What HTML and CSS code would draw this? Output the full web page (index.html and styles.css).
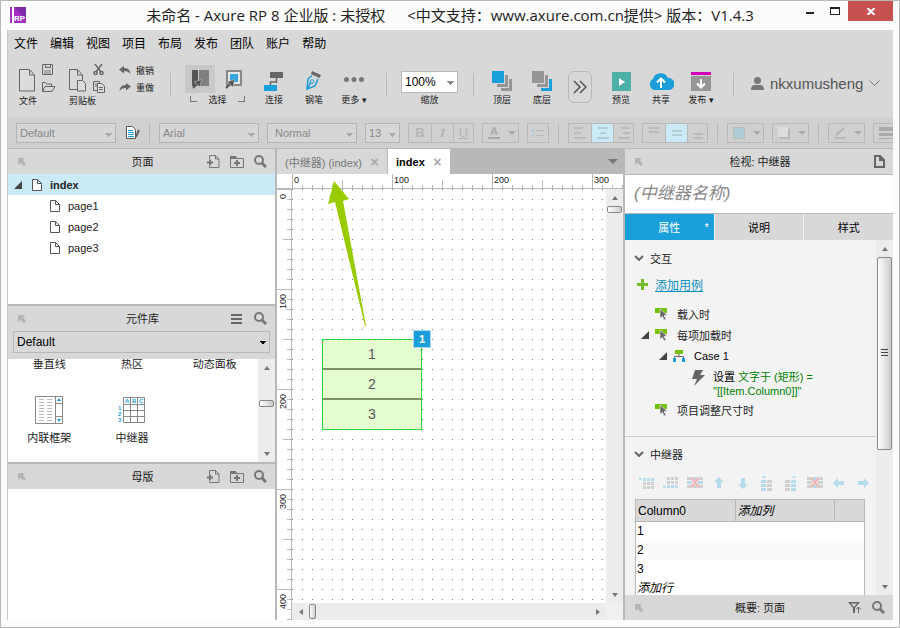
FILE: index.html
```html
<!DOCTYPE html>
<html lang="zh-CN">
<head>
<meta charset="utf-8">
<title>未命名 - Axure RP 8</title>
<link rel="stylesheet" href="styles.css">
</head>

<body>
<svg class="defs" aria-hidden="true">
	<symbol id="i-corner" viewBox="0 0 8 8"><path d="M0 0h7L5 2l3 4-2 2-4-3-2 2z" fill="#b4b4b4"/></symbol>
	<symbol id="i-page" viewBox="0 0 10 12"><path d="M.5.5h5l4 4v7h-9zM5.500.5v4h4" fill="#fff" stroke="#555"/></symbol>
	<symbol id="i-search" viewBox="0 0 13 13"><circle cx="5" cy="5" r="4" fill="none" stroke="#777" stroke-width="2"/><path d="M8 8l4 4" stroke="#777" stroke-width="3"/></symbol>
	<symbol id="i-addpage" viewBox="0 0 13 13"><path d="M2.500 4V.5h6l3.500 3.500v8.500H2.500V11M8.500.5V4H12" fill="none" stroke="#777"/><path d="M0 7.500h6M3 4.500v6" stroke="#777" stroke-width="2"/></symbol>
	<symbol id="i-addfolder" viewBox="0 0 14 12"><path d="M.5 11.500V.5h5l1 2h7v9z" fill="none" stroke="#777"/><path d="M0 0h6l1 3H0z" fill="#777"/><path d="M4 7h6M7 4v6" stroke="#777" stroke-width="2"/></symbol>
	<symbol id="i-twist" viewBox="0 0 8 8"><path d="M8 0v8H0z" fill="#444"/></symbol>
	<symbol id="i-chevron" viewBox="0 0 10 6"><path d="M1 1l4 4 4-4" fill="none" stroke="#666" stroke-width="2"/></symbol>
	<symbol id="i-event" viewBox="0 0 13 12"><path d="M0 0h12v5H0z" fill="#76c100"/><path d="M5 1l7 6-3 .5 2 3.500-2 1-1.500-3.500L5 10z" fill="#666" stroke="#f3f3f3" stroke-width=".6"/></symbol>
	<symbol id="i-cursor" viewBox="0 0 10 10"><path d="M1 9l4-4" stroke="#555" stroke-width="2"/><path d="M9.500.5L8 8 2 3z" fill="#555" stroke="#ccc" stroke-width=".5"/></symbol>
</svg>

<div class="window">
	<header class="titlebar">
		<svg class="logo" width="16" height="16"><path d="M0 0h2v16H0z" fill="#a42fc2"/><path d="M4 0h12v16H4z" fill="#a42fc2"/><path d="M4 0h12v12z" fill="#7d2aa8"/><text x="4" y="14" font-size="8" font-weight="bold" fill="#fff">RP</text></svg>
		<h1><span>未命名 - Axure RP 8 企业版 : 未授权</span><span>&lt;中文支持：www.axure.com.cn提供&gt; 版本：V1.4.3</span></h1>
		<div class="win-btns">
			<button aria-label="最小化"><svg width="8" height="8"><path d="M0 5h8v2H0z" fill="#222"/></svg></button>
			<button aria-label="最大化"><svg width="10" height="8"><path d="M0 0h10v8H0zM1 2v5h8V2z" fill="#222" fill-rule="evenodd"/></svg></button>
			<button class="close" aria-label="关闭"><svg width="8" height="7"><path d="M.5 0l7 7M7.500 0l-7 7" stroke="#fff" stroke-width="2"/></svg></button>
		</div>
	</header>

	<div class="app">
		<nav class="menubar">
			<button>文件</button><button>编辑</button><button>视图</button><button>项目</button><button>布局</button><button>发布</button><button>团队</button><button>账户</button><button>帮助</button>
		</nav>

		<div class="toolbar">
			<div class="group file">
				<div class="icons">
					<button aria-label="新建"><svg width="17" height="23"><path d="M.5.500h10l5 5.500v16H.5zM10.500.500V6h5" fill="#dcdcdc" stroke="#666"/></svg></button>
					<div class="pair">
						<button aria-label="保存"><svg width="13" height="12"><path d="M.5.500h10v10H.5z" fill="none" stroke="#666"/><path d="M3.500.500v3h5v-3" fill="none" stroke="#666"/><path d="M2 6h7v4H2z" fill="#aaa"/></svg></button>
						<button aria-label="打开"><svg width="14" height="11"><path d="M.5 9.500V.500h3l1 1.500h5v2M.5 9.500L3 4.500h10L10 9.500z" fill="none" stroke="#666"/></svg></button>
					</div>
				</div>
				<div class="label">文件</div>
			</div>
			<div class="group clip">
				<div class="icons">
					<button aria-label="粘贴"><svg width="18" height="23"><path d="M8 20.500H.5V.500h8l5 5.500v5M8.500.500V6h5" fill="none" stroke="#666"/><path d="M8.500 11.500h5l3 3v7.500h-8z" fill="#dcdcdc" stroke="#666"/></svg></button>
					<div class="pair">
						<button aria-label="剪切"><svg width="12" height="12" fill="none" stroke="#666" stroke-width="1.500"><path d="M2 0l6 8M9 0L3 8"/><circle cx="2.500" cy="9" r="1.600"/><circle cx="8.500" cy="9" r="1.600"/></svg></button>
						<button aria-label="复制"><svg width="13" height="12" stroke="#666"><path d="M.5.500h6v9h-6zM2 3h3M2 5h3" fill="none"/><path d="M4.500 2.500h4l3 2.500v6.500h-7zM6 6.500h4M6 8.500h4" fill="#dcdcdc"/></svg></button>
					</div>
				</div>
				<div class="label">剪贴板</div>
			</div>
			<div class="undo">
				<button><svg width="12" height="9"><path d="M0 3.500L5 0v2c4 0 6 2 6.500 6C10 6 8 5 5 5v2.500z" fill="#666"/></svg>撤销</button>
				<button><svg width="12" height="9"><path d="M12 3.500L7 0v2C3 2 1 4 .5 8 2 6 4 5 7 5v2.500z" fill="#666"/></svg>重做</button>
			</div>
			<span class="sep"></span>
			<div class="group select">
				<div class="icons">
					<button class="on" aria-label="相交选中"><svg width="17" height="20"><path d="M0 1h6v16H0z" fill="#555"/><path d="M7 1h10v16H7z" fill="#808080"/><use href="#i-cursor" y="10" width="10" height="10"/></svg></button>
					<button aria-label="包含选中"><svg width="18" height="20"><path d="M2 2h14v14H2z" fill="#fff" fill-opacity=".4" stroke="#888" stroke-width="2"/><path d="M5 5h8v8H5z" fill="#36a7db"/><use href="#i-cursor" y="10" width="10" height="10"/></svg></button>
				</div>
				<div class="label"><i class="br-l"></i>选择<i class="br-r"></i></div>
			</div>
			<button class="tool"><span><svg width="20" height="20"><path d="M6 1h13v6H6z" fill="#666"/><path d="M12.500 7v4h-6v3" fill="none" stroke="#666" stroke-width="1.500"/><path d="M0 14h13v6H0z" fill="#1a9fda"/></svg></span>连接</button>
			<button class="tool"><span><svg width="16" height="20"><path d="M6 0l9 4-1.500 3L5 3z" fill="#666"/><path d="M6 4.500L2 8 1 18l8-3 3-7M1 18l4-7" fill="none" stroke="#1a9fda" stroke-width="1.500"/><circle cx="6" cy="10.500" r="1.800" fill="none" stroke="#1a9fda"/></svg></span>钢笔</button>
			<button class="tool"><span><svg width="20" height="20" fill="#777"><circle cx="2.500" cy="8.500" r="2.500"/><circle cx="10" cy="8.500" r="2.500"/><circle cx="17.500" cy="8.500" r="2.500"/></svg></span>更多 ▾</button>
			<span class="sep"></span>
			<div class="zoom">
				<select id="zoom"><option>100%</option></select>
				<label for="zoom">缩放</label>
			</div>
			<span class="sep"></span>
			<div class="tools">
				<button class="tool"><span><svg width="20" height="20" fill="#969696"><path d="M17 8h3v12H9v-3h8zM13 4h3v12H5v-3h8z"/><path d="M0 0h12v12H0z" fill="#1a9fda"/></svg></span>顶层</button>
				<button class="tool"><span><svg width="20" height="20" fill="#969696"><path d="M17 8h3v12H9v-3h8z" fill="#1a9fda"/><path d="M13 4h3v12H5v-3h8zM0 0h12v12H0z"/></svg></span>底层</button>
			</div>
			<button class="more" aria-label="展开"><svg width="14" height="14" fill="none" stroke="#555" stroke-width="1.500"><path d="M1 1l6 6-6 6M7 1l6 6-6 6"/></svg></button>
			<div class="tools">
				<button class="tool"><span><svg width="19" height="20"><path d="M0 1h19v19H0z" fill="#4bb1a6"/><path d="M7 7l6 4-6 4z" fill="#fff"/></svg></span>预览</button>
				<button class="tool"><span><svg width="26" height="20"><path d="M6 19a6 6 0 0 1-1-11 8 8 0 0 1 15-1 6 6 0 0 1 1 12z" fill="#1a9fda"/><path d="M13 17V8M9 11.500l4-4 4 4" fill="none" stroke="#fff" stroke-width="2"/></svg></span>共享</button>
				<button class="tool"><span><svg width="20" height="20"><path d="M0 1h20v3H0z" fill="#d400b8"/><path d="M0 5h20v15H0z" fill="#969696"/><path d="M10 8v8M6 12.500l4 4 4-4" fill="none" stroke="#fff" stroke-width="2"/></svg></span>发布 ▾</button>
			</div>
			<span class="sep"></span>
			<button class="user"><svg width="13" height="13" fill="#777"><circle cx="6.500" cy="3.500" r="3.500"/><path d="M0 13c0-4 2-5 4-5h5c2 0 4 1 4 5z"/></svg>nkxumusheng<svg width="11" height="7"><path d="M.5.500l5 5 5-5" fill="none" stroke="#777"/></svg></button>
		</div>

		<div class="stylebar">
			<select class="w100" aria-label="样式"><option>Default</option></select>
			<button class="plain" aria-label="样式管理"><svg width="14" height="13"><path d="M.5.500h6l3 3v9h-9z" fill="#fff" stroke="#555"/><path d="M2 4.500h5M2 6.500h6M2 8.500h6M2 10.500h6" stroke="#1a9fda"/><path d="M13 4l-3 7" stroke="#666" stroke-width="2"/></svg></button>
			<span class="bar"></span>
			<select class="w100" aria-label="字体"><option>Arial</option></select>
			<select class="w90" aria-label="字型"><option>Normal</option></select>
			<select class="w35" aria-label="字号"><option>13</option></select>
			<div class="seg"><button><b>B</b></button><button class="it">I</button><button><u>U</u></button></div>
			<button class="drop" aria-label="文字颜色"><svg width="12" height="13"><path d="M0 11h12v2H0z" fill="#aaa"/><text x="2" y="9" font-size="11" font-weight="bold" fill="#aaa">A</text></svg></button>
			<div class="seg"><button aria-label="项目符号"><svg width="12" height="8"><path d="M4 1.500h8M4 6.500h8" stroke="#bbb"/><path d="M0 1.500h2M0 6.500h2" stroke="#9cc8d8" stroke-width="2"/></svg></button></div>
			<span class="bar"></span>
			<div class="seg">
				<button aria-label="左对齐"><svg width="12" height="12"><path d="M0 1h9M0 6h7M0 11h12" stroke="#bbb" stroke-width="2"/></svg></button>
				<button class="on" aria-label="居中"><svg width="12" height="12"><path d="M1 1h10M3 6h6M0 11h12" stroke="#b4ccd4" stroke-width="2"/></svg></button>
				<button aria-label="右对齐"><svg width="12" height="12"><path d="M3 1h9M5 6h7M0 11h12" stroke="#bbb" stroke-width="2"/></svg></button>
			</div>
			<div class="seg">
				<button aria-label="顶部"><svg width="10" height="12"><path d="M0 1h10M0 5h10" stroke="#bbb" stroke-width="2"/></svg></button>
				<button class="on" aria-label="中部"><svg width="10" height="12"><path d="M0 4h10M0 8h10" stroke="#b4ccd4" stroke-width="2"/></svg></button>
				<button aria-label="底部"><svg width="10" height="12"><path d="M0 7h10M0 11h10" stroke="#bbb" stroke-width="2"/></svg></button>
			</div>
			<span class="bar"></span>
			<button class="drop" aria-label="填充"><svg width="12" height="12"><path d="M.5.500h11v11H.5z" fill="#aecbd8" stroke="#bbb"/></svg></button>
			<button class="drop" aria-label="阴影"><svg width="12" height="12"><path d="M2 2h10v10H2z" fill="#b8b8b8"/><path d="M0 0h10v10H0z" fill="#ddd"/></svg></button>
			<span class="bar"></span>
			<button class="drop" aria-label="线条"><svg width="13" height="12"><path d="M0 10h12v2H0z" fill="#bbb"/><path d="M2 8l8-7" stroke="#b4b4b4" stroke-width="2"/></svg></button>
			<button class="drop" aria-label="线宽"><svg width="14" height="12"><path d="M0 0h14v4H0zM0 6h14v3H0zM0 11h14v1H0z" fill="#aaa"/></svg></button>
		</div>

		<main class="panels">
			<aside class="left">
				<section class="pages">
					<div class="head">
						<svg width="8" height="8"><use href="#i-corner"/></svg>
						<h2>页面</h2>
						<div class="acts">
							<button aria-label="添加页面"><svg width="13" height="13"><use href="#i-addpage"/></svg></button>
							<button aria-label="添加文件夹"><svg width="14" height="12"><use href="#i-addfolder"/></svg></button>
							<button aria-label="搜索"><svg width="13" height="13"><use href="#i-search"/></svg></button>
						</div>
					</div>
					<ul class="tree">
						<li class="root"><svg class="twist" width="8" height="8"><use href="#i-twist"/></svg><svg class="pg" width="10" height="12"><use href="#i-page"/></svg>index</li>
						<li><svg class="pg" width="10" height="12"><use href="#i-page"/></svg>page1</li>
						<li><svg class="pg" width="10" height="12"><use href="#i-page"/></svg>page2</li>
						<li><svg class="pg" width="10" height="12"><use href="#i-page"/></svg>page3</li>
					</ul>
				</section>
				<section class="library">
					<div class="head">
						<svg width="8" height="8"><use href="#i-corner"/></svg>
						<h2>元件库</h2>
						<div class="acts wide">
							<button aria-label="菜单"><svg width="11" height="10"><path d="M0 1h11M0 5h11M0 9h11" stroke="#666" stroke-width="2"/></svg></button>
							<button aria-label="搜索"><svg width="13" height="13"><use href="#i-search"/></svg></button>
						</div>
					</div>
					<div class="lib-pick"><select aria-label="元件库"><option>Default</option></select></div>
					<div class="lib-body">
						<div class="widgets">
							<div>垂直线</div>
							<div>热区</div>
							<div>动态面板</div>
							<div class="widget"><svg width="28" height="28"><path d="M.5.500h27v27H.5zM20.500.500v27M20.500 7.500h7M20.500 20.500h7" fill="#fff" stroke="#888"/><path d="M4 3.500h5M4 6.500h5M4 9.500h5M4 12.500h5M4 15.500h5M4 18.500h5M4 21.500h5M4 24.500h5M12 3.500h5M12 6.500h5M12 9.500h5M12 12.500h5M12 15.500h5M12 18.500h5M12 21.500h5M12 24.500h5" stroke="#bbb"/><path d="M22 5l2-3 2 3zM22 23l2 3 2-3z" fill="#1a9fda"/></svg>内联框架</div>
							<div class="widget"><svg width="28" height="28"><path d="M5.500 1.500h21v25h-21zM5.500 8.500h21M5.500 14.500h21M5.500 20.500h21M12.500 1.500v25M19.500 1.500v25" fill="#fff" stroke="#888"/><g fill="#1a9fda" font-size="6" font-weight="bold"><text x="7" y="7">A</text><text x="14" y="7">B</text><text x="21" y="7">C</text><text x="0" y="14">1</text><text x="0" y="20">2</text><text x="0" y="26">3</text></g></svg>中继器</div>
						</div>
						<div class="scroll v"><i class="up"></i><div class="track"><b class="knob lib-knob"></b></div><i class="down"></i></div>
					</div>
				</section>
				<section class="masters">
					<div class="head">
						<svg width="8" height="8"><use href="#i-corner"/></svg>
						<h2>母版</h2>
						<div class="acts">
							<button aria-label="添加母版"><svg width="13" height="13"><use href="#i-addpage"/></svg></button>
							<button aria-label="添加文件夹"><svg width="14" height="12"><use href="#i-addfolder"/></svg></button>
							<button aria-label="搜索"><svg width="13" height="13"><use href="#i-search"/></svg></button>
						</div>
					</div>
				</section>
			</aside>

			<section class="editor">
				<div class="tabs">
					<div class="tab"><span>(中继器) (index)</span><button aria-label="关闭">×</button></div>
					<div class="tab active"><span>index</span><button aria-label="关闭">×</button></div>
					<button class="tab-list" aria-label="标签列表"></button>
				</div>
				<div class="corner"></div>
				<div class="ruler-x"><span>0</span><span>100</span><span>200</span><span>300</span></div>
				<div class="ruler-y"><span>0</span><span>100</span><span>200</span><span>300</span><span>400</span></div>
				<div class="canvas">
					<div class="repeater">
						<div>1</div>
						<div>2</div>
						<div>3</div>
						<span class="badge">1</span>
					</div>
				</div>
				<div class="scroll v"><i class="up"></i><div class="track"><b class="knob"></b></div><i class="down"></i></div>
				<div class="scroll h"><i class="prev"></i><div class="track"><b class="knob"></b></div><i class="next"></i></div>
				<div class="scroll-end"></div>
				<svg class="pointer" width="40" height="148"><path d="M7 1l15 18-6 2 23 125h-1L8 22l-7 2z" fill="#99cc00"/></svg>
			</section>

			<aside class="right">
				<div class="head">
					<svg width="8" height="8"><use href="#i-corner"/></svg>
					<h2>检视: 中继器</h2>
					<div class="acts"><button aria-label="页面"><svg width="11" height="13"><path d="M1 1h5l4 4v7H1zM6 1v4h4" fill="none" stroke="#666" stroke-width="2"/></svg></button></div>
				</div>
				<input class="name" type="text" placeholder="(中继器名称)" aria-label="名称">
				<div class="props">
					<button class="active">属性<sup>*</sup></button>
					<button>说明</button>
					<button>样式</button>
				</div>
				<div class="inspect">
					<div class="content">
						<h3><svg width="10" height="6"><use href="#i-chevron"/></svg>交互</h3>
						<div class="add"><svg width="11" height="11"><path d="M4 0h3v4h4v3H7v4H4V7H0V4h4z" fill="#72b92b"/></svg><a href="#">添加用例</a></div>
						<ul class="events">
							<li><i class="twist"></i><svg class="ic" width="13" height="12"><use href="#i-event"/></svg>载入时</li>
							<li><svg class="twist" width="8" height="8"><use href="#i-twist"/></svg><svg class="ic" width="13" height="12"><use href="#i-event"/></svg>每项加载时</li>
							<li class="case"><svg class="twist" width="8" height="8"><use href="#i-twist"/></svg><svg class="ic" width="12" height="12"><path d="M2 0h8v4H2z" fill="#76c100"/><path d="M6 4v2M1.500 9V6.500h9V9" fill="none" stroke="#666"/><path d="M0 8h3v4H0zM9 8h3v4H9z" fill="#1a9fda"/></svg>Case 1</li>
							<li class="action"><svg width="13" height="16"><path d="M3 0h8L8 5h5L2 16l3-7H0z" fill="#666"/></svg><div>设置 <em>文字于 (矩形) =<br>"[[Item.Column0]]"</em></div></li>
							<li><i class="twist"></i><svg class="ic" width="13" height="12"><use href="#i-event"/></svg>项目调整尺寸时</li>
						</ul>
						<h3 class="line"><svg width="10" height="6"><use href="#i-chevron"/></svg>中继器</h3>
						<div class="row-tools">
							<button aria-label="上方插入行"><svg width="16" height="12"><path d="M0 0l3 2-3 2z" fill="#b4dcec"/><path d="M4 1h3v3H4zM8 1h3v3H8zM12 1h3v3h-3z" fill="#b4dcec"/><path d="M4 5h3v3H4zM8 5h3v3H8zM12 5h3v3h-3zM4 9h3v3H4zM8 9h3v3H8zM12 9h3v3h-3z" fill="#d0d0d0"/></svg></button>
							<button aria-label="下方插入行"><svg width="16" height="12"><path d="M0 8l3 2-3 2z" fill="#b4dcec"/><path d="M4 8h3v3H4zM8 8h3v3H8zM12 8h3v3h-3z" fill="#b4dcec"/><path d="M4 0h3v3H4zM8 0h3v3H8zM12 0h3v3h-3zM4 4h3v3H4zM8 4h3v3H8zM12 4h3v3h-3z" fill="#d0d0d0"/></svg></button>
							<button aria-label="删除行"><svg width="16" height="12"><path d="M0 0h5v3H0zM6 0h4v3H6zM11 0h5v3h-5zM0 8h5v3H0zM6 8h4v3H6zM11 8h5v3h-5z" fill="#d0d0d0"/><path d="M0 4h5v3H0zM11 4h5v3h-5z" fill="#b4dcec"/><path d="M4 1l8 9M12 1l-8 9" stroke="#f0b4b4" stroke-width="2"/></svg></button>
							<button aria-label="上移"><svg width="10" height="12"><path d="M5 0l5 5H7v6H3V5H0z" fill="#b4dcec"/></svg></button>
							<button aria-label="下移"><svg width="10" height="12"><path d="M5 12l5-5H7V1H3v6H0z" fill="#b4dcec"/></svg></button>
							<button aria-label="左侧插入列"><svg width="12" height="15"><path d="M1 0h4L3 3zM0 4h5v3H0zM0 8h5v3H0zM0 12h5v3H0z" fill="#b4dcec"/><path d="M6 4h5v3H6zM6 8h5v3H6zM6 12h5v3H6z" fill="#d0d0d0"/></svg></button>
							<button aria-label="右侧插入列"><svg width="12" height="15"><path d="M7 0h4L9 3zM6 4h5v3H6zM6 8h5v3H6zM6 12h5v3H6z" fill="#b4dcec"/><path d="M0 4h5v3H0zM0 8h5v3H0zM0 12h5v3H0z" fill="#d0d0d0"/></svg></button>
							<button aria-label="删除列"><svg width="16" height="12"><path d="M0 0h5v3H0zM11 0h5v3h-5zM0 4h5v3H0zM11 4h5v3h-5zM0 8h5v3H0zM11 8h5v3h-5z" fill="#d0d0d0"/><path d="M6 0h4v3H6zM6 8h4v3H6z" fill="#b4dcec"/><path d="M4 1l8 9M12 1l-8 9" stroke="#f0b4b4" stroke-width="2"/></svg></button>
							<button aria-label="左移"><svg width="12" height="10"><path d="M0 5l5-5v3h6v4H5v3z" fill="#b4dcec"/></svg></button>
							<button aria-label="右移"><svg width="12" height="10"><path d="M12 5L7 0v3H1v4h6v3z" fill="#b4dcec"/></svg></button>
						</div>
						<table class="data">
							<thead><tr><th>Column0</th><th><em>添加列</em></th><th class="end"></th></tr></thead>
							<tbody>
								<tr><td colspan="3">1</td></tr>
								<tr><td colspan="3">2</td></tr>
								<tr><td colspan="3">3</td></tr>
								<tr><td colspan="3"><em>添加行</em></td></tr>
							</tbody>
						</table>
					</div>
					<div class="scroll v"><i class="up"></i><div class="track"><b class="knob long"></b></div><i class="down"></i></div>
				</div>
				<div class="head">
					<svg width="8" height="8"><use href="#i-corner"/></svg>
					<h2>概要: 页面</h2>
					<div class="acts">
						<button aria-label="筛选"><svg width="14" height="11"><path d="M0 0h12L7 6v5H5V6z" fill="#666"/><path d="M3 1.500h6L6 5z" fill="#d8d8d8"/><path d="M10.500 11V5M8 7.500L10.500 5 13 7.500" fill="none" stroke="#666"/></svg></button>
						<button aria-label="搜索"><svg width="13" height="13"><use href="#i-search"/></svg></button>
					</div>
				</div>
			</aside>
		</main>
	</div>
</div>
</body>
</html>
```

FILE: styles.css
```css
* {
	box-sizing: border-box;
}
html, body {
	margin: 0px;
	padding: 0px;
}
body {
	font-family: "Liberation Sans", "Noto Sans CJK SC", sans-serif;
	font-size: 11px;
	color: #222;
}
button, select, input {
	font: inherit;
	color: inherit;
	margin: 0px;
	padding: 0px;
	border: none;
	border-radius: 0px;
	background: none;
}
button {
	cursor: pointer;
}
h1, h2, h3, ul {
	margin: 0px;
	padding: 0px;
	font-weight: normal;
	list-style: none;
}
svg {
	display: block;
	flex: none;
}
.defs {
	position: absolute;
	width: 0px;
	height: 0px;
}
.window {
	display: flex;
	flex-direction: column;
	height: 100vh;
	padding: 0px 6px 7px;
	border: 1px solid #b8b8b8;
	background: #fcfcfc;
}

/* 标题栏 */
.titlebar {
	display: grid;
	grid-template-columns: 94px 1fr 94px;
	height: 29px;
}
.logo {
	margin: 6px 0px 0px 3px;
}
.titlebar h1 {
	display: flex;
	justify-content: center;
	gap: 22px;
	font-family: "Open Sans", "Noto Sans CJK SC", sans-serif;
	font-size: 15px;
	line-height: 29px;
	white-space: nowrap;
}
.win-btns {
	display: grid;
	grid-template-columns: 22px 27px 45px;
	height: 20px;
}
.win-btns button {
	display: flex;
	align-items: center;
	justify-content: center;
}
.win-btns .close {
	background: #c75050;
}

.app {
	flex: 1;
	min-height: 0px;
	display: flex;
	flex-direction: column;
	border-left: 1px solid #c8c8c8;
	background: #d8d8d8;
}
.menubar {
	display: flex;
	flex: none;
	gap: 12px;
	height: 24px;
	padding: 0px 6px;
	font-size: 12px;
	color: #000;
}

/* 工具栏 */
.toolbar {
	display: flex;
	flex: none;
	height: 64px;
	font-size: 9px;
	white-space: nowrap;
}
.toolbar .sep {
	flex: none;
	width: 1px;
	height: 23px;
	margin: 19px 12px 0px;
	background: #b8b8b8;
}
.group {
	padding-top: 10px;
}
.group .icons {
	display: flex;
	align-items: flex-end;
	height: 29px;
	gap: 6px;
}
.group .icons > button {
	padding-bottom: 1px;
}
.group .label {
	line-height: 16px;
}
.file {
	width: 50px;
	margin-left: 11px;
}
.clip {
	width: 50px;
}
.pair {
	display: flex;
	flex-direction: column;
	justify-content: space-between;
	height: 29px;
}
.undo {
	display: flex;
	flex-direction: column;
	gap: 1px;
	width: 39px;
	padding-top: 8px;
}
.undo button {
	display: flex;
	align-items: center;
	gap: 5px;
	height: 16px;
}
.undo + .sep {
	margin-right: 14px;
}
.group.select {
	width: 69px;
}
.group.select .icons {
	gap: 10px;
}
.group.select .icons button {
	display: flex;
	align-items: center;
	justify-content: center;
	height: 28px;
	padding: 0px;
}
.group.select .on {
	width: 30px;
	background: #c8c8c8;
}
.group.select .label {
	display: flex;
	justify-content: space-between;
	width: 55px;
	margin-left: 5px;
	line-height: 14px;
}
.group.select .label i {
	width: 7px;
	height: 6px;
	margin-top: 3px;
	border-bottom: 1px solid #777;
}
.group.select .label .br-l {
	border-left: 1px solid #777;
}
.group.select .label .br-r {
	border-right: 1px solid #777;
}
.tools {
	display: flex;
}
.tool {
	display: flex;
	flex-direction: column;
	align-items: center;
	width: 40px;
	padding-top: 17px;
	line-height: 14px;
}
.tool span {
	height: 22px;
}
.zoom {
	display: flex;
	flex-direction: column;
	align-items: center;
	width: 57px;
	padding-top: 17px;
	line-height: 14px;
	margin: 0px 3px 0px 2px;
}
.zoom + .sep {
	margin-right: 8px;
}
.zoom select {
	width: 57px;
	height: 22px;
	background-color: #fff;
	font-size: 12px;
	color: #000;
}
.more {
	display: flex;
	align-items: center;
	justify-content: center;
	width: 24px;
	height: 32px;
	margin: 17px 9px 0px 6px;
	border: 1px solid #b8b8b8;
	border-radius: 6px;
}
.user {
	display: flex;
	align-items: center;
	gap: 6px;
	height: 22px;
	margin: 18px 0px 0px 5px;
	font-size: 15px;
	color: #555;
}

select {
	appearance: none;
	padding: 0px 3px;
	border: 1px solid #b8b8b8;
	background-image: linear-gradient(to bottom left, #888 50%, transparent 50%), linear-gradient(to bottom right, #888 50%, transparent 50%);
	background-position: right 6px top 9px, right 2px top 9px;
	background-size: 4px 4px;
	background-repeat: no-repeat;
}

/* 样式栏 */
.stylebar {
	display: flex;
	flex: none;
	align-items: center;
	gap: 8px;
	height: 31px;
	padding: 0px 0px 1px 8px;
	border-bottom: 1px solid #b8b8b8;
	background: #d0d0d0;
	color: #888;
	overflow: hidden;
}
.stylebar > * {
	flex: none;
}
.stylebar select {
	height: 20px;
	border-color: #b4b4b4;
	background-color: #d6d6d6;
	background-image: linear-gradient(to bottom left, #aaa 50%, transparent 50%), linear-gradient(to bottom right, #aaa 50%, transparent 50%);
}
.w100 {
	width: 100px;
}
.w90 {
	width: 90px;
}
.stylebar .w90 {
	padding-left: 7px;
}
.w35 {
	width: 35px;
}
.plain {
	padding-left: 2px;
}
.bar {
	width: 1px;
	height: 20px;
	margin: 0px 1px;
	background: #b8b8b8;
}
.seg {
	display: flex;
	height: 20px;
	border: 1px solid #b8b8b8;
}
.seg button {
	display: flex;
	align-items: center;
	justify-content: center;
	width: 22px;
	font-size: 13px;
	color: #b4b4b4;
}
.seg button:last-child {
	width: 20px;
}
.seg button + button {
	border-left: 1px solid #b8b8b8;
}
.seg .it {
	font-family: "Liberation Serif", serif;
	font-style: italic;
	font-weight: bold;
}
.seg .on {
	background: #cbeaf7;
}
.drop {
	display: flex;
	align-items: center;
	justify-content: space-between;
	width: 37px;
	height: 20px;
	padding: 0px 2px 0px 5px;
	border: 1px solid #b8b8b8;
}
.drop::after {
	content: "";
	border: 4px solid transparent;
	border-top-color: #aaa;
	border-bottom: none;
}

.panels {
	flex: 1;
	min-height: 0px;
	display: grid;
	grid-template-columns: 267px minmax(0px, 1fr) 268px;
	grid-template-rows: minmax(0px, 1fr);
	gap: 2px;
	background: #b8b8b8;
}
.head {
	display: grid;
	grid-template-columns: 1fr auto 1fr;
	align-items: center;
	flex: none;
	height: 25px;
	padding: 0px 8px 0px 10px;
	background: #d8d8d8;
}
.head h2 {
	font-size: 11px;
	line-height: 14px;
}
.acts {
	display: flex;
	align-items: center;
	justify-content: flex-end;
	gap: 10px;
}
.acts.wide {
	gap: 12px;
}

/* 左侧面板 */
.left {
	display: flex;
	flex-direction: column;
	gap: 2px;
	min-height: 0px;
}
.left section {
	min-height: 0px;
	background: #fff;
}
.pages {
	flex: 155;
}
.library {
	flex: 156;
	display: flex;
	flex-direction: column;
}
.masters {
	flex: 156;
}
.tree li {
	display: flex;
	align-items: center;
	height: 21px;
	padding-left: 42px;
}
.tree .root {
	padding-left: 6px;
	background: #cbeaf7;
	font-weight: bold;
}
.tree .twist {
	margin-right: 10px;
}
.tree .pg {
	margin-right: 8px;
}
.lib-pick {
	flex: none;
	height: 28px;
	padding: 0px 5px;
	background: #d8d8d8;
}
.lib-pick select {
	width: 100%;
	height: 22px;
	color: #000;
	font-size: 12px;
	background-image: linear-gradient(to bottom left, #000 50%, transparent 50%), linear-gradient(to bottom right, #000 50%, transparent 50%);
}
.lib-body {
	flex: 1;
	display: flex;
	min-height: 0px;
	overflow: hidden;
}
.widgets {
	flex: 1;
	display: grid;
	grid-template-columns: 1fr 1fr 1fr;
	grid-template-rows: 11px 53px;
	row-gap: 26px;
	padding-right: 2px;
	line-height: 11px;
	text-align: center;
}
.widget {
	display: flex;
	flex-direction: column;
	align-items: center;
	gap: 9px;
}

/* 滚动条 */
.scroll {
	display: flex;
	flex: none;
	min-height: 0px;
	background: #ececec;
}
.scroll.v {
	flex-direction: column;
	width: 17px;
}
.scroll.h {
	height: 17px;
}
.scroll i {
	display: flex;
	align-items: center;
	justify-content: center;
	flex: none;
	width: 17px;
	height: 17px;
}
.scroll i::before {
	content: "";
	border: 3px solid transparent;
}
.scroll .up::before {
	border-top: none;
	border-bottom: 4px solid #777;
}
.scroll .down::before {
	border-bottom: none;
	border-top: 4px solid #777;
}
.scroll .prev::before {
	border-left: none;
	border-right: 4px solid #777;
}
.scroll .next::before {
	border-right: none;
	border-left: 4px solid #777;
}
.track {
	flex: 1;
	min-height: 0px;
}
.knob {
	display: block;
	border: 1px solid #888;
	border-radius: 2px;
	background: linear-gradient(to right, #fff, #ccc);
}
.v .knob {
	width: 15px;
	height: 7px;
	margin-left: 1px;
}
.h .knob {
	width: 7px;
	height: 15px;
	margin-top: 1px;
}
.v .lib-knob {
	margin-top: 24px;
}
.v .long {
	display: flex;
	align-items: center;
	justify-content: center;
	height: 60%;
}
.long::before {
	content: "";
	width: 7px;
	height: 8px;
	background: repeating-linear-gradient(#444 0px 1px, transparent 1px 3px);
}

/* 画布 */
.editor {
	position: relative;
	display: grid;
	grid-template-columns: 15px minmax(0px, 1fr) 17px;
	grid-template-rows: 25px 15px minmax(0px, 1fr) 17px;
}
.tabs {
	grid-column: 1 / 4;
	display: flex;
	background: #b8b8b8;
}
.tab {
	display: flex;
	align-items: center;
	gap: 8px;
	padding: 0px 8px;
	background: #d8d8d8;
	color: #777;
}
.tab button {
	width: 9px;
	font-size: 14px;
	font-weight: bold;
	color: #aaa;
}
.tab.active {
	margin-left: 1px;
	background: #fff;
	color: #000;
	font-weight: bold;
}
.tab-list {
	margin-left: auto;
	padding: 0px 5px;
}
.tab-list::after {
	content: "";
	display: block;
	border: 5px solid transparent;
	border-top-color: #777;
	border-bottom: none;
}
.corner {
	border-bottom: 1px solid #b8b8b8;
	background: #fff;
}
.ruler-x {
	grid-column: 2 / 4;
	display: flex;
	overflow: hidden;
	border-bottom: 1px solid #b8b8b8;
	background:
		linear-gradient(to right, #b8b8b8 1px, transparent 1px) 0px 0px / 100px 14px repeat-x,
		linear-gradient(to right, #b8b8b8 1px, transparent 1px) 0px 6px / 50px 8px repeat-x,
		linear-gradient(to right, #b8b8b8 1px, transparent 1px) 0px 11px / 10px 3px repeat-x,
		#fff;
}
.ruler-x span {
	flex: none;
	width: 100px;
	padding-left: 2px;
	font-size: 9px;
	line-height: 12px;
}
.ruler-x span:last-child {
	width: auto;
}
.ruler-y {
	grid-row: 3 / 5;
	overflow: hidden;
	border-right: 1px solid #b8b8b8;
	background:
		linear-gradient(#b8b8b8 1px, transparent 1px) 0px 0px / 14px 100px repeat-y,
		linear-gradient(#b8b8b8 1px, transparent 1px) 6px 0px / 8px 50px repeat-y,
		linear-gradient(#b8b8b8 1px, transparent 1px) 10px 0px / 4px 10px repeat-y,
		#fff;
}
.ruler-y span {
	display: block;
	height: 100px;
	padding-bottom: 5px;
	font-size: 9px;
	line-height: 12px;
	writing-mode: vertical-rl;
	transform: rotate(180deg);
	text-align: right;
}
.ruler-y span:last-child {
	height: 25px;
}
.canvas {
	position: relative;
	overflow: hidden;
	background: conic-gradient(at 1px 1px, transparent 270deg, #777 270deg) 0px 0px / 10px 10px #fff;
}
.repeater {
	position: absolute;
	left: 30px;
	top: 150px;
	width: 100px;
	border: 1px solid #6fa860;
	outline: 1px dashed #00f020;
	outline-offset: -1px;
	background: #e5fcd0;
	font-size: 14px;
	color: #555;
	text-align: center;
}
.repeater div {
	height: 30px;
	line-height: 28px;
	border-bottom: 2px solid #7e9468;
}
.repeater div:nth-child(3) {
	height: 29px;
	border: none;
}
.badge {
	position: absolute;
	right: -10px;
	top: -10px;
	width: 18px;
	height: 18px;
	border: 1px solid #a8dcf2;
	background: #1a9fda;
	color: #fff;
	font-size: 11px;
	font-weight: bold;
	line-height: 16px;
}
.scroll-end {
	background: #f0f0f0;
}
.pointer {
	position: absolute;
	left: 50px;
	top: 31px;
}

/* 右侧检视面板 */
.right {
	display: flex;
	flex-direction: column;
	min-height: 0px;
}
.name {
	flex: none;
	width: 100%;
	height: 40px;
	padding: 0px 9px;
	border: solid #b8b8b8;
	border-width: 1px 0px;
	background: #fff;
	font-size: 17px;
	font-style: italic;
}
.name::placeholder {
	color: #888;
}
.props {
	flex: none;
	display: grid;
	grid-template-columns: 1fr 1fr 1fr;
	gap: 1px;
	height: 26px;
	background: #f3f3f3;
}
.props button {
	position: relative;
	background: #d8d8d8;
	color: #000;
}
.props .active {
	background: #1a9fda;
	color: #fff;
}
.props sup {
	position: absolute;
	right: 5px;
	top: 6px;
	font-size: 11px;
	line-height: 14px;
}
.inspect {
	flex: 1;
	display: flex;
	min-height: 0px;
	background: #f3f3f3;
}
.content {
	flex: 1;
	padding-top: 6px;
	overflow: hidden;
}
.content h3 {
	display: flex;
	align-items: center;
	gap: 6px;
	height: 24px;
	padding-left: 9px;
	font-size: 11px;
}
.content .line {
	height: 35px;
	margin-top: 16px;
	border-top: 1px solid #ccc;
}
.add {
	display: flex;
	align-items: center;
	gap: 7px;
	height: 28px;
	padding-left: 12px;
	font-size: 12px;
}
.add a {
	color: #0a8fc0;
}
.events {
	padding-top: 5px;
}
.events li {
	display: flex;
	align-items: center;
	height: 21px;
	padding-left: 16px;
}
.events .twist {
	width: 8px;
	margin-right: 6px;
}
.events .ic {
	margin-right: 9px;
}
.events .case {
	padding-left: 34px;
	color: #000;
}
.events .action {
	align-items: flex-start;
	gap: 8px;
	height: 33px;
	padding: 4px 0px 0px 67px;
	line-height: 14px;
	color: #000;
}
.action em {
	font-style: normal;
	color: #008000;
}
.row-tools {
	display: flex;
	height: 28px;
	padding-left: 10px;
}
.row-tools button {
	display: flex;
	align-items: center;
	justify-content: center;
	flex: none;
	width: 24px;
	height: 24px;
}
.data {
	width: 230px;
	margin-left: 10px;
	border-collapse: collapse;
	table-layout: fixed;
	border: 1px solid #b8b8b8;
	background: #fff;
	font-size: 12px;
	color: #000;
}
.data th {
	height: 22px;
	padding: 0px 2px;
	border: 1px solid #b8b8b8;
	background: #d8d8d8;
	font-weight: normal;
	text-align: left;
	line-height: 16px;
}
.data .end {
	width: 30px;
}
.data td {
	height: 19px;
	padding: 0px 1px;
	line-height: 18px;
}
.data tr:nth-child(2) td {
	background: #fafafa;
}
```
